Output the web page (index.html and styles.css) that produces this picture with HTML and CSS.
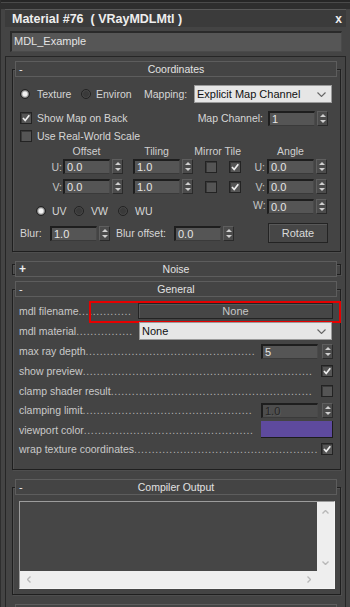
FILE: index.html
```html
<!DOCTYPE html>
<html>
<head>
<meta charset="utf-8">
<link rel="stylesheet" href="styles.css">
</head>
<body>
<div class="win">
  <div class="topstrip"></div>
  <div class="titlebar"><span class="ttl">Material #76&nbsp; ( VRayMDLMtl )</span><span class="close">x</span></div>
  <div class="namefield">MDL_Example</div>

  <div class="panel">
    <!-- Coordinates -->
    <section class="rollout first">
      <div class="rhead"><span class="sign">-</span><span class="rtitle">Coordinates</span></div>
      <div class="rframe fcoords">
        <div class="crow1">
          <span class="radio on"></span><span class="lb w-tex">Texture</span>
          <span class="radio"></span><span class="lb w-env">Environ</span>
          <span class="lb w-map">Mapping:</span>
          <div class="dd dd-map"><span class="ddtext">Explicit Map Channel</span><svg class="chev" viewBox="0 0 9 5"><polyline points="0.5,0.5 4.5,4.5 8.5,0.5"/></svg></div>
        </div>
        <div class="crow2">
          <span class="cb"><svg viewBox="0 0 10 10"><polyline points="2,5 4.2,7.5 8.3,2.2"/></svg></span>
          <span class="lb cbl">Show Map on Back</span>
          <span class="lb push">Map Channel:</span>
          <div class="spin mapch"><span class="fld">1</span><span class="arr"></span></div>
        </div>
        <div class="crow3">
          <span class="cb"></span>
          <span class="lb cbl">Use Real-World Scale</span>
        </div>
        <div class="cgrid chead">
          <span class="hd g-off">Offset</span>
          <span class="hd g-til">Tiling</span>
          <span class="hd g-mt">Mirror Tile</span>
          <span class="hd g-ang">Angle</span>
        </div>
        <div class="cgrid crowu">
          <span class="ax g-l1">U:</span>
          <div class="spin g-s1"><span class="fld">0.0</span><span class="arr"></span></div>
          <div class="spin g-s2"><span class="fld">1.0</span><span class="arr"></span></div>
          <span class="cb g-c1"></span>
          <span class="cb g-c2"><svg viewBox="0 0 10 10"><polyline points="2,5 4.2,7.5 8.3,2.2"/></svg></span>
          <span class="ax g-l2">U:</span>
          <div class="spin g-s3"><span class="fld">0.0</span><span class="arr"></span></div>
        </div>
        <div class="cgrid crowv">
          <span class="ax g-l1">V:</span>
          <div class="spin g-s1"><span class="fld">0.0</span><span class="arr"></span></div>
          <div class="spin g-s2"><span class="fld">1.0</span><span class="arr"></span></div>
          <span class="cb g-c1"></span>
          <span class="cb g-c2"><svg viewBox="0 0 10 10"><polyline points="2,5 4.2,7.5 8.3,2.2"/></svg></span>
          <span class="ax g-l2">V:</span>
          <div class="spin g-s3"><span class="fld">0.0</span><span class="arr"></span></div>
        </div>
        <div class="cgrid croww">
          <div class="uvw">
            <span class="radio on"></span><span class="lb w-uv">UV</span>
            <span class="radio"></span><span class="lb w-vw">VW</span>
            <span class="radio"></span><span class="lb w-wu">WU</span>
          </div>
          <span class="ax g-l2 top">W:</span>
          <div class="spin g-s3 top"><span class="fld">0.0</span><span class="arr"></span></div>
        </div>
        <div class="crowblur">
          <span class="lb w-blur">Blur:</span>
          <div class="spin"><span class="fld">1.0</span><span class="arr"></span></div>
          <span class="lb w-boff">Blur offset:</span>
          <div class="spin"><span class="fld">0.0</span><span class="arr"></span></div>
          <span class="btn rotate">Rotate</span>
        </div>
      </div>
    </section>

    <!-- Noise -->
    <section class="rollout">
      <div class="rhead"><span class="sign plus">+</span><span class="rtitle">Noise</span></div>
      <div class="rframe collapsed"></div>
    </section>

    <!-- General -->
    <section class="rollout">
      <div class="rhead"><span class="sign">-</span><span class="rtitle">General</span></div>
      <div class="rframe fgen">
        <div class="grow h20 marked">
          <span class="gl">mdl filename</span><span class="dots">...............</span>
          <span class="btn gbtn">None</span>
          <span class="redbox"></span>
        </div>
        <div class="grow h20">
          <span class="gl">mdl material</span><span class="dots">................</span>
          <div class="dd dd-mat"><span class="ddtext">None</span><svg class="chev" viewBox="0 0 9 5"><polyline points="0.5,0.5 4.5,4.5 8.5,0.5"/></svg></div>
        </div>
        <div class="grow h20">
          <span class="gl">max ray depth</span><span class="dots">................................................</span>
          <div class="spin gspin"><span class="fld">5</span><span class="arr"></span></div>
        </div>
        <div class="grow h20">
          <span class="gl">show preview</span><span class="dots">.................................................................</span>
          <span class="cb gcb"><svg viewBox="0 0 10 10"><polyline points="2,5 4.2,7.5 8.3,2.2"/></svg></span>
        </div>
        <div class="grow h19">
          <span class="gl">clamp shader result</span><span class="dots">.........................................................</span>
          <span class="cb gcb"></span>
        </div>
        <div class="grow h20">
          <span class="gl">clamping limit</span><span class="dots">................................................</span>
          <div class="spin gspin dis"><span class="fld">1.0</span><span class="arr"></span></div>
        </div>
        <div class="grow h19">
          <span class="gl">viewport color</span><span class="dots">................................................</span>
          <span class="swatch"></span>
        </div>
        <div class="grow h20">
          <span class="gl">wrap texture coordinates</span><span class="dots">....................................................</span>
          <span class="cb gcb"><svg viewBox="0 0 10 10"><polyline points="2,5 4.2,7.5 8.3,2.2"/></svg></span>
        </div>
      </div>
    </section>

    <!-- Compiler Output -->
    <section class="rollout">
      <div class="rhead"><span class="sign">-</span><span class="rtitle">Compiler Output</span></div>
      <div class="rframe fcomp">
        <div class="scrollbox">
          <div class="sarea"></div>
          <div class="vbar">
            <svg class="sarr" viewBox="0 0 7 4"><polyline points="0.5,3.5 3.5,0.5 6.5,3.5"/></svg>
            <svg class="sarr" viewBox="0 0 7 4"><polyline points="0.5,0.5 3.5,3.5 6.5,0.5"/></svg>
          </div>
          <div class="hbar">
            <svg class="sarrh" viewBox="0 0 4 7"><polyline points="3.5,0.5 0.5,3.5 3.5,6.5"/></svg>
            <svg class="sarrh" viewBox="0 0 4 7"><polyline points="0.5,0.5 3.5,3.5 0.5,6.5"/></svg>
          </div>
          <div class="corner"></div>
        </div>
      </div>
    </section>

    <section class="rollout">
      <div class="rhead"></div>
    </section>
  </div>
</div>
</body>
</html>
```
FILE: styles.css
```css
* { box-sizing: border-box; }
html, body { margin: 0; padding: 0; }
body {
  width: 350px;
  height: 607px;
  overflow: hidden;
  background: #444444;
  font-family: "Liberation Sans", Arial, sans-serif;
  font-size: 10.5px;
  color: #d6d6d6;
}
.win { height: 607px; border-left: 1px solid #2e2e2e; }

.topstrip {
  height: 9px;
  background: linear-gradient(#262626 0 2px, #4a4a4a 2px 3px, #2e2e2e 3px);
}
.titlebar {
  height: 18px;
  margin: 0 4px 0 4px;
  background: #3b3b3b;
  border-top: 1px solid #585858;
  display: flex;
  align-items: center;
  padding-left: 7px;
  font-weight: bold;
  font-size: 12.5px;
  color: #eeeeee;
  white-space: pre;
}
.close { margin-left: auto; margin-right: 4px; font-size: 12px; }

.namefield {
  height: 21px;
  margin: 4px 8px 0 9px;
  background: #565656;
  border-top: 2px solid #2a2a2a;
  border-left: 2px solid #2a2a2a;
  border-right: 1px solid #4a4a4a;
  border-bottom: 1px solid #4a4a4a;
  padding-left: 2px;
  color: #e4e4e4;
  font-size: 11px;
  line-height: 17px;
}

.panel {
  margin: 4px 4px 0 4px;
  border-top: 1px solid #262626;
  border-left: 1px solid #262626;
  border-right: 1px solid #262626;
  padding-top: 4px;
  height: 560px;
}

.rollout { margin-top: 9px; }
.rollout.first { margin-top: 0; }
.rhead {
  position: relative;
  z-index: 1;
  margin-left: 9px;
  width: 322px;
  height: 16px;
  border: 1px solid #5d5d5d;
  background: #444444;
  display: grid;
  grid-template-columns: 1fr auto 1fr;
  align-items: center;
  color: #e2e2e2;
  font-size: 10.5px;
}
.sign {
  grid-column: 1;
  padding-left: 3px;
  color: #ededed;
  font-size: 11px;
}
.sign.plus { font-weight: bold; font-size: 12px; }
.rtitle { grid-column: 2; white-space: nowrap; }
.rframe {
  margin-left: 6px;
  width: 329px;
  margin-top: -8px;
  border: 1px solid #1f1f1f;
  box-shadow: inset 1px 1px 0 #525252, 1px 1px 0 #4e4e4e;
}
.rframe.collapsed { margin-top: -13px; height: 11px; margin-bottom: -3px; }

/* Coordinates */
.fcoords { padding: 7px 7px 8px 7px; }
.lb { white-space: nowrap; flex: none; }
.crow1 { display: flex; align-items: center; height: 18px; margin-top: 8px; }
.w-tex { margin-left: 7px; width: 44px; }
.w-env { margin-left: 5px; width: 48px; }
.w-map { width: 50px; }
.crow2 { display: flex; align-items: center; height: 16px; margin-top: 7px; margin-right: 5px; }
.crow3 { display: flex; align-items: center; height: 16px; margin-top: 2px; }
.cbl { margin-left: 5px; }
.push { margin-left: auto; margin-right: 5px; }

.radio {
  flex: none;
  width: 10px; height: 10px;
  border-radius: 50%;
  background: radial-gradient(circle, #3a3a3a 0 2.5px, #4a4a4a 4px);
  border: 1px solid #222;
}
.radio.on { background: radial-gradient(circle, #f2f2f2 0 2px, #a8a8a8 3px, #6a6a6a 4px); }

.cb {
  flex: none;
  width: 12px; height: 12px;
  background: #555555;
  border: 1px solid #232323;
  box-shadow: inset 1px 1px 0 #3a3a3a;
  display: flex;
  align-items: center;
  justify-content: center;
}
.cb svg { width: 10px; height: 10px; fill: none; stroke: #eeeeee; stroke-width: 1.7; }

.dd {
  flex: none;
  height: 18px;
  background: #e6e6e6;
  border: 1px solid #9a9a9a;
  display: flex;
  align-items: center;
  padding-left: 2px;
  color: #111;
  font-size: 11px;
}
.dd-map { width: 138px; }
.ddtext { flex: 1; white-space: nowrap; }
.chev { width: 9px; height: 5px; margin-right: 5px; fill: none; stroke: #666; stroke-width: 1.1; }

.spin { display: flex; gap: 2px; height: 15px; flex: none; }
.fld {
  width: 47px;
  height: 15px;
  background: #555555;
  border-top: 2px solid #1e1e1e;
  border-left: 2px solid #1e1e1e;
  border-right: 1px solid #4a4a4a;
  border-bottom: 1px solid #3a3a3a;
  padding-left: 2px;
  color: #e6e6e6;
  font-size: 11px;
  line-height: 12px;
}
.arr {
  width: 11px;
  height: 15px;
  background: #4b4b4b;
  border: 1px solid #2a2a2a;
  border-top-color: #5e5e5e;
  border-left-color: #5e5e5e;
  display: flex;
  flex-direction: column;
  align-items: center;
  justify-content: space-between;
  padding: 2px 0 2px;
}
.arr::before {
  content: "";
  border-left: 3px solid transparent;
  border-right: 3px solid transparent;
  border-bottom: 3px solid #cfcfcf;
}
.arr::after {
  content: "";
  border-left: 3px solid transparent;
  border-right: 3px solid transparent;
  border-top: 3px solid #cfcfcf;
}

.cgrid {
  display: grid;
  grid-template-columns: 43px 60px 10px 60px 12px 12px 12px 12px 12px 14px 60px;
  align-items: center;
}
.cgrid > * { grid-row: 1; }
.chead { height: 14px; }
.hd { white-space: nowrap; color: #d0d0d0; }
.g-off { grid-column: 2; text-align: center; padding-right: 13px; }
.g-til { grid-column: 4; text-align: center; padding-right: 13px; }
.g-mt { grid-column: 4 / 9; text-align: right; }
.g-ang { grid-column: 11; text-align: center; padding-right: 13px; }
.crowu { height: 15px; margin-top: 1px; }
.crowv { height: 15px; margin-top: 5px; }
.croww { height: 18px; margin-top: 4px; }
.ax { text-align: right; color: #c4c4c4; }
.g-l1 { grid-column: 1; padding-right: 1px; }
.g-s1 { grid-column: 2; }
.g-s2 { grid-column: 4; }
.g-c1 { grid-column: 6; }
.g-c2 { grid-column: 8; }
.g-l2 { grid-column: 10; padding-right: 2px; }
.g-s3 { grid-column: 11; }
.top { align-self: start; margin-top: 1px; }
.uvw { grid-column: 1 / 6; align-self: end; display: flex; align-items: center; padding-left: 16px; height: 12px; margin-bottom: -1px; }
.w-uv { margin-left: 6px; width: 22px; }
.w-vw { margin-left: 7px; width: 27px; }
.w-wu { margin-left: 7px; }

.crowblur { display: flex; align-items: center; height: 20px; margin-top: 7px; margin-right: 5px; }
.w-blur { width: 30px; }
.w-boff { margin-left: 6px; width: 58px; }
.btn {
  flex: none;
  background: #464646;
  border: 1px solid #232323;
  box-shadow: inset 1px 1px 0 #585858;
  color: #dadada;
  display: flex;
  align-items: center;
  justify-content: center;
}
.rotate { margin-left: auto; width: 60px; height: 20px; font-size: 11px; }

/* General */
.fgen { padding: 7px 7px 10px 6px; }
.grow { display: flex; align-items: center; position: relative; }
.grow.marked { margin-top: 4px; }
.h20 { height: 20px; }
.h19 { height: 19px; }
.gl { white-space: nowrap; flex: none; color: #c9c9c9; }
.dots {
  flex: none;
  white-space: nowrap;
  letter-spacing: 0.62px;
  color: #b4b4b4;
}
.grow > .btn, .grow > .dd, .grow > .spin, .grow > .cb, .grow > .swatch { margin-left: auto; }
.gbtn { width: 195px; height: 16px; color: #c6c6c6; font-size: 11px; }
.redbox {
  position: absolute;
  left: 70px;
  top: 0;
  width: 252px;
  height: 22px;
  border: 2px solid #e60000;
}
.dd-mat { width: 193px; height: 18px; margin-right: 1px; }
.gspin { gap: 4px; }
.gspin .fld { width: 57px; }
.gspin.dis .fld { color: #262626; text-shadow: 1px 1px 0 #5a5a5a; background: #4d4d4d; }
.swatch {
  flex: none;
  width: 72px;
  height: 17px;
  background: #5e4a9e;
  border-right: 1px solid #1c1c1c;
  border-bottom: 1px solid #1c1c1c;
}

/* Compiler Output */
.fcomp { padding: 13px 5px 5px 6px; }
.scrollbox {
  width: 316px;
  height: 88px;
  display: grid;
  grid-template-columns: 1fr 17px;
  grid-template-rows: 1fr 17px;
  border-top: 1px solid #9c9c9c;
  border-left: 1px solid #9c9c9c;
  border-right: 1px solid #f4f4f4;
  border-bottom: 1px solid #f4f4f4;
}
.sarea { background: #464646; }
.vbar {
  background: #eeeeee;
  display: flex;
  flex-direction: column;
  align-items: center;
  justify-content: space-between;
  padding: 8px 0 6px;
}
.hbar {
  background: #eeeeee;
  display: flex;
  align-items: center;
  justify-content: space-between;
  padding: 0 6px 0 7px;
}
.corner { background: #eeeeee; }
.sarr { width: 7px; height: 4px; fill: none; stroke: #b8b8b8; stroke-width: 1.4; }
.sarrh { width: 4px; height: 7px; fill: none; stroke: #b8b8b8; stroke-width: 1.4; }
```
